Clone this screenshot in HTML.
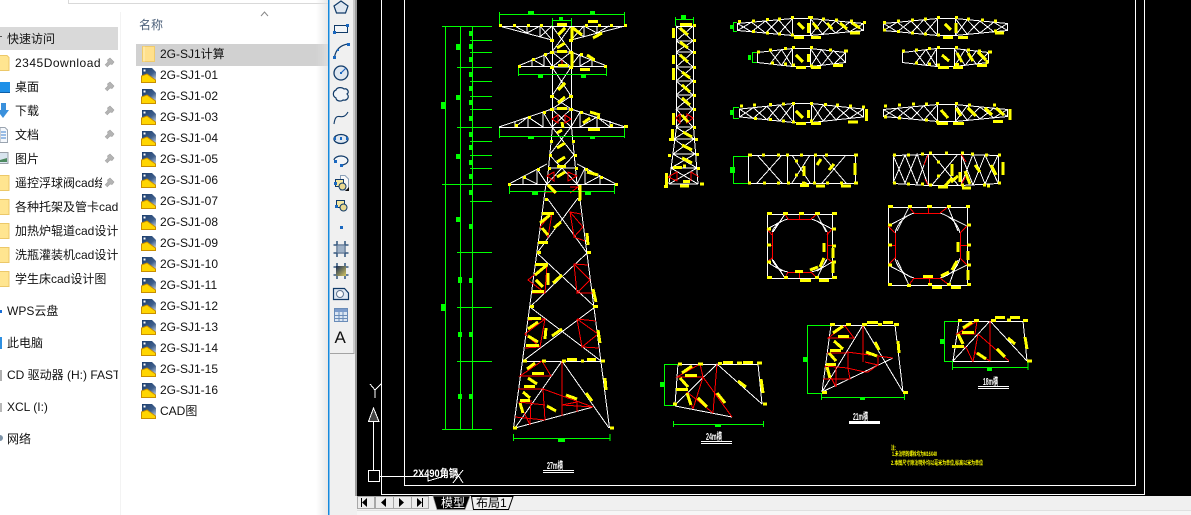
<!DOCTYPE html>
<html lang="zh">
<head>
<meta charset="utf-8">
<title>2G-SJ1</title>
<style>
html,body{margin:0;padding:0;background:#fff}
body{position:relative;width:1191px;height:515px;overflow:hidden;font-family:"Liberation Sans","Noto Sans CJK SC",sans-serif;font-size:12px;color:#111}
.t{position:absolute;height:18px;line-height:18px;white-space:nowrap;overflow:hidden;margin-top:1px}
svg{position:absolute;left:0;top:0}
</style>
</head>
<body>
<div style="position:absolute;left:68px;top:0;width:260px;height:3px;border-left:1px solid #d9d9d9;border-bottom:1px solid #d9d9d9"></div>
<div style="position:absolute;left:120px;top:12px;width:1px;height:503px;background:#f3f3f3"></div>
<div style="position:absolute;left:0;top:27px;width:118px;height:23px;background:#d9d9d9"></div>
<div style="position:absolute;left:136px;top:44px;width:192px;height:22px;background:#d1d1d1"></div>
<div style="position:absolute;left:316px;top:0;width:12px;height:515px;background:linear-gradient(90deg,rgba(225,225,225,0),rgba(225,225,225,.75))"></div>

<div class="t" style="left:139px;top:15px;color:#4c607a">名称</div>
<div class="t" style="left:7px;top:29px">快速访问</div>
<div class="t" style="left:15px;top:53px;letter-spacing:.5px">2345Download</div>
<div class="t" style="left:15px;top:77px">桌面</div>
<div class="t" style="left:15px;top:101px">下载</div>
<div class="t" style="left:15px;top:125px">文档</div>
<div class="t" style="left:15px;top:149px">图片</div>
<div class="t" style="left:15px;top:173px;width:87px">遥控浮球阀cad绘</div>
<div class="t" style="left:15px;top:197px;width:103px">各种托架及管卡cad</div>
<div class="t" style="left:15px;top:221px;width:103px">加热炉辊道cad设计</div>
<div class="t" style="left:15px;top:245px;width:103px">洗瓶灌装机cad设计</div>
<div class="t" style="left:15px;top:269px;width:103px">学生床cad设计图</div>
<div class="t" style="left:7px;top:301px">WPS云盘</div>
<div class="t" style="left:7px;top:333px">此电脑</div>
<div class="t" style="left:7px;top:365px;width:111px">CD 驱动器 (H:) FAST</div>
<div class="t" style="left:7px;top:397px">XCL (I:)</div>
<div class="t" style="left:7px;top:429px">网络</div>

<div class="t" style="left:160px;top:44px">2G-SJ1计算</div>
<div class="t" style="left:160px;top:65px">2G-SJ1-01</div>
<div class="t" style="left:160px;top:86px">2G-SJ1-02</div>
<div class="t" style="left:160px;top:107px">2G-SJ1-03</div>
<div class="t" style="left:160px;top:128px">2G-SJ1-04</div>
<div class="t" style="left:160px;top:149px">2G-SJ1-05</div>
<div class="t" style="left:160px;top:170px">2G-SJ1-06</div>
<div class="t" style="left:160px;top:191px">2G-SJ1-07</div>
<div class="t" style="left:160px;top:212px">2G-SJ1-08</div>
<div class="t" style="left:160px;top:233px">2G-SJ1-09</div>
<div class="t" style="left:160px;top:254px">2G-SJ1-10</div>
<div class="t" style="left:160px;top:275px">2G-SJ1-11</div>
<div class="t" style="left:160px;top:296px">2G-SJ1-12</div>
<div class="t" style="left:160px;top:317px">2G-SJ1-13</div>
<div class="t" style="left:160px;top:338px">2G-SJ1-14</div>
<div class="t" style="left:160px;top:359px">2G-SJ1-15</div>
<div class="t" style="left:160px;top:380px">2G-SJ1-16</div>
<div class="t" style="left:160px;top:401px">CAD图</div>

<svg width="1191" height="515" viewBox="0 0 1191 515" xmlns="http://www.w3.org/2000/svg">
<defs>
<linearGradient id="bl" x1="0" y1="0" x2="1" y2="1"><stop offset="0" stop-color="#183a6a"/><stop offset=".6" stop-color="#3f5f8c"/><stop offset="1" stop-color="#c8d4e2"/></linearGradient>
<linearGradient id="gr" x1="0" y1="0" x2="1" y2="1"><stop offset="0" stop-color="#152a55"/><stop offset="1" stop-color="#d8c860"/></linearGradient>
<g id="cf">
<path d="M1 1H11L15 5V13L1 9Z" fill="url(#bl)"/>
<rect x="2.500" y="2.500" width="2" height="2" fill="#fff"/>
<path d="M.5 15.500V9L6 7L14.500 13V15.500Z" fill="#ffd500" stroke="#c98f00"/>
</g>
<path id="pin" d="M0 7L3 4L2.500 2L5 0L9 4L7 6.500L5 6L2 9" fill="#b4b4b4" stroke="#a0a0a0" stroke-width=".6"/>
<g id="tr1" fill="none" stroke="#fff">
<path vector-effect="non-scaling-stroke" d="M0 5L55 0H73L126 5V12L73 17H55L0 12ZM55 0V17M73 0V17M14 3.700L28 14.500L41 1.300L55 17M14 13.300L28 2.500L41 15.700L55 0M0 5L14 13.300M0 12L14 3.700M112 3.700L98 14.500L85 1.300L73 17M112 13.300L98 2.500L85 15.700L73 0M126 5L112 13.300M126 12L112 3.700"/>
</g>
<g id="tr2" fill="none" stroke="#fff">
<path vector-effect="non-scaling-stroke" d="M0 4L35 0H53L88 4V14L53 18H35L0 14ZM0 4V14M35 0V18M53 0V18M12 2L24 17L35 0M12 16L24 1L35 18M88 4L76 16L64 1L53 18M88 14L76 2L64 17L53 0"/>
</g>
</defs>

<!-- explorer icons -->
<path d="M261 16L264.500 12L268 16" fill="none" stroke="#888"/>
<path d="M0 36.500h2" stroke="#555"/>
<path d="M142.500 46.500h12v15h-12z" fill="#ffe08c" stroke="#f0cb6c"/>
<path d="M144 46.500v15" stroke="#fff0be"/>
<use href="#cf" x="141" y="67"/><use href="#cf" x="141" y="88"/><use href="#cf" x="141" y="109"/><use href="#cf" x="141" y="130"/><use href="#cf" x="141" y="151"/><use href="#cf" x="141" y="172"/><use href="#cf" x="141" y="193"/><use href="#cf" x="141" y="214"/><use href="#cf" x="141" y="235"/><use href="#cf" x="141" y="256"/><use href="#cf" x="141" y="277"/><use href="#cf" x="141" y="298"/><use href="#cf" x="141" y="319"/><use href="#cf" x="141" y="340"/><use href="#cf" x="141" y="361"/><use href="#cf" x="141" y="382"/><use href="#cf" x="141" y="403"/>

<use href="#pin" x="105" y="58"/><use href="#pin" x="105" y="82"/><use href="#pin" x="105" y="106"/><use href="#pin" x="105" y="130"/><use href="#pin" x="105" y="154"/><use href="#pin" x="105" y="178"/>
<path d="M-1 55.500H7L9 57.500V70.500H-1Z" fill="#ffe590" stroke="#ecc869"/>
<path d="M0 82H10V92H0Z" fill="#1e90e8"/><path d="M0 92.500H10" stroke="#0d5fa8"/>
<path d="M1 103H6V110H9L3 118L-3 110H1Z" fill="#3a90dc"/>
<path d="M0 127.500H5L7.500 130V142.500H0Z" fill="#f5f8fc" stroke="#9aa4b0"/><path d="M1 132H6M1 135H6M1 138H6" stroke="#3a80d0"/>
<rect x="-1" y="152.500" width="9" height="11" fill="#d8e4ee" stroke="#9aa0a8"/><path d="M0 160L7 158V162H0Z" fill="#4d8a60"/>
<path d="M-1 175.500H9V190.500H-1Z M-1 199.500H9V214.500H-1Z M-1 223.500H9V238.500H-1Z M-1 247.500H9V262.500H-1Z M-1 271.500H9V286.500H-1Z" fill="#ffe590" stroke="#ecc869"/>
<rect x="0" y="310" width="2" height="3" fill="#1a6fd8"/>
<rect x="0" y="337" width="2" height="12" fill="#2e8fe0"/>
<rect x="0" y="370" width="2" height="11" fill="#b0b0b0"/>
<rect x="0" y="403" width="2" height="9" fill="#b8b8b8"/>
<circle cx="0" cy="438" r="3" fill="#7d93a8"/>

<!-- CAD toolbar -->
<rect x="328" y="0" width="1" height="515" fill="#1689dc"/>
<rect x="329" y="0" width="1" height="515" fill="#7fbfee"/>
<rect x="330" y="0" width="27" height="515" fill="#f0f0f0"/>
<path d="M330 353.500H354M354 0V354" stroke="#a4a4a4" stroke-width="1"/>
<rect x="355" y="0" width="2" height="496" fill="#9c9c9c"/>
<g stroke="#103a68" fill="none">
<path d="M341 1L348 6L345.500 13H336.500L334 6Z" fill="#dfe7f0" stroke-width="1.200"/>
<rect x="334.500" y="25.500" width="13" height="7" fill="#f2f5f8"/>
<path d="M334.500 57C336 49 341 45 348 44" stroke-width="1.200"/>
<circle cx="341" cy="73" r="7" fill="#dfe7f0" stroke-width="1.300"/>
<path d="M341 73L346 68" stroke="#2468c0" stroke-width="1.200"/>
<path d="M336 90C337 87 342 87 344 89C347 88 350 92 347 94C350 97 347 101 343 100C341 102 336 101 336 98C332 96 333 91 336 90Z" fill="#f0f3f7" stroke-width="1.200"/>
<path d="M334 124C336 109 342 123 348 112" stroke-width="1.100"/>
<ellipse cx="341" cy="139" rx="7" ry="4.500" fill="#dfe7f0" stroke-width="1.300"/>
<path d="M334 160A7 4.500 0 1 1 341 165" stroke-width="1.200" fill="#f2f5f8"/>
<path d="M340.500 175.500H345L348.500 179V190H340.500Z" fill="#f8f8f8" stroke="#8aa0b8"/>
<rect x="335.500" y="179.500" width="8" height="7" fill="#f5e7a0"/>
<circle cx="342.500" cy="186.500" r="3.500" fill="#e8d890"/>
<path d="M345 191L349 187V191Z" fill="#111" stroke="none"/>
<rect x="336.500" y="200.500" width="8" height="7" fill="#f5e7a0"/>
<circle cx="343.500" cy="207.500" r="3.500" fill="#e8d890"/>
<path d="M333.500 245H348.500M333.500 253H348.500M337 241V257M345 241V257" stroke-width="1.300"/>
<path d="M337 245H345V253H337Z" fill="#9fb1c6" stroke="#5b7390"/>
<path d="M333.500 267H348.500M333.500 275H348.500M337 263V279M345 263V279" stroke-width="1.300"/>
<path d="M336 266H346V276H336Z" fill="url(#gr)" stroke="none"/>
<path d="M333.500 288.500H344.500L348.500 293V299.500H333.500Z" fill="#dfe9f3" stroke-width="1.200"/>
<circle cx="340" cy="294" r="3.500" fill="#f8fafc" stroke="#5f7590"/>
</g>
<rect x="334.500" y="308.500" width="13" height="13" fill="#dbe6f3" stroke="#6a8cb8"/>
<rect x="335" y="309" width="12" height="3" fill="#7c9ccb"/>
<path d="M334.500 315.500H347.500M334.500 318.500H347.500M339 312V321M343 312V321" stroke="#6a8cb8"/>
<g fill="#1a68c0">
<rect x="333" y="31" width="3" height="3"/><rect x="346" y="24" width="3" height="3"/>
<rect x="333" y="56" width="3" height="3"/><rect x="347" y="43" width="3" height="3"/><rect x="337" y="49" width="2" height="2"/>
<rect x="340" y="72" width="2" height="2"/>
<rect x="340" y="137" width="2" height="3"/><rect x="334" y="137" width="2" height="3"/><rect x="346" y="137" width="2" height="3"/>
<rect x="334" y="160" width="3" height="3"/><rect x="340" y="164" width="3" height="3"/>
<rect x="334" y="182" width="3" height="3"/><rect x="335" y="205" width="3" height="3"/>
<rect x="340" y="226" width="3" height="3"/>
</g>
<text x="334.500" y="343" font-family="'Liberation Sans',sans-serif" font-size="17" fill="#111">A</text>

<!-- drawing area -->
<rect x="357" y="0" width="834" height="496" fill="#000"/>
<g shape-rendering="crispEdges" fill="none">
<path stroke="#fff" d="M381.500 0V494.500H1144.500V0M404.500 0V485.500H1135.500V0"/>

<!-- UCS -->
<path stroke="#fff" d="M370 384L375 390L381 384M375 390V398M373.500 421V470M368.500 470.500H379.500V481.500H368.500ZM380 476.500H428M428 477V481L443 476.500M453 483L463 470M455 470L463 483"/>
<path stroke="#fff" fill="#444" d="M373.500 408L368.500 421.500H379L373.500 408Z"/>

<!-- main tower white -->
<path stroke="#fff" d="M552.500 26V127M571.500 26V127M552.500 127L547 184M571.500 127L577 184
M499 26.500H625M499 26L552 40M625 26L571 40M527 26V33M540 26V37M584 26V37M597 26V33M515 26L527 33L540 26L552 40M540 37L552 26M609 26L597 33L584 26L571 40M584 37L571 26
M552 26L571 52M571 26L552 52M552 52H571M552 52L571 67M571 52L552 67M552 67H571M552 67L571 96M571 67L552 96M552 96L571 109M571 96L552 109M552 109H571M552 109L571 127M571 109L552 127
M518 66.500H607M518 66L552 52M607 66L571 52M532 59V66M544 54V66M580 54V66M592 59V66M532 59L544 66M544 54L552 66M592 59L580 66M580 54L571 66
M499 127.500H625M499 127L552 109M625 127L571 109M515 121V127M528 117V127M543 112V127M580 112V127M597 117V127M610 121V127M528 117L515 127M528 117L543 127M543 112L552 127M597 117L610 127M597 117L580 127M580 112L571 127
M552 127L574 155M571 127L549.500 155M549.500 155L577 184M574 155L547 184M548 168H576
M509 184.500H616M509 184L547 164M616 184L577 164M523 177V184M537 169V184M585 168V184M600 176V184M523 177L537 184M537 169L547 184M600 176L585 184M585 168L577 184
M546 184L513.500 428M578 184L609.500 428M547 198L587 253M578 198L537 253M537 253L595 307M587 253L530 307M530 307L601 361M595 307L523 361M523 361.500H601M515 428L593 407M562 361L609 428M562 361L515 428"/>

<!-- small tower white -->
<path stroke="#fff" d="M676.500 26V127L669 184M693.500 26V127L698 184M676 26.500H693M676 41H693M676 52H693M676 67H693M676 81H693M676 95H693M676 109H693M676 127H693M674 139H694M673 154H695M671 168H697M669 184H698
M676 26L693 41M693 26L676 41M676 41L693 52M693 41L676 52M676 52L693 67M693 52L676 67M676 67L693 81M693 67L676 81M676 81L693 95M693 81L676 95M676 95L693 109M693 95L676 109M676 109L693 127M693 109L676 127M676 127L694 139M693 127L674 139M674 139L695 154M694 139L673 154M673 154L697 168M695 154L671 168M671 168L698 184M697 168L669 184"/>

<!-- trusses -->
<use href="#tr1" transform="translate(737.500 18.500)"/>
<use href="#tr1" transform="translate(883.500 18.500) scale(.984 1)"/>
<use href="#tr2" transform="translate(757.500 48.500)"/>
<use href="#tr2" transform="translate(902.500 48.500) scale(.977 1)"/>
<use href="#tr1" transform="translate(739.500 103.500) scale(.984 1.118)"/>
<use href="#tr1" transform="translate(883.500 104.500) scale(.984 1)"/>
<path stroke="#fff" d="M748.500 155.500H855.500V183.500H748.500ZM787.500 155V183M814.500 155V183M757 155L782 183M782 155L757 183M792 183L810 155M792 155L810 183M822 155L846 183M846 155L822 183"/>
<path stroke="#fff" d="M893.500 155.500L928 154.500H961L998.500 155.500V183.500L961 185.500H928L893.500 183.500ZM928.500 154V185M961.500 154V185M893 155L905 183L917 154L928 185M893 183L905 155L917 184L928 154M932 154L958 185M932 185L958 154M961 154L973 185L985 155L998 183M961 185L973 154L985 184L998 155"/>
<path stroke="#f00" d="M928 155L924 165M928 185L925 179M961 154L966 162M961 185L966 176"/>

<!-- square sections -->
<path stroke="#fff" d="M767.500 214.500H832.500V278.500H767.500ZM785 214L773 232M817 214L826 232M785 278L773 260M817 278L826 260M767 229L782 221M832 229L817 221M767 262L782 271M832 262L817 271M788 219Q776 222 772 232M811 219Q823 222 827 232M788 272Q776 270 772 259M811 272Q823 270 827 259"/>
<path stroke="#f00" d="M788 219.500H811M788 272.500H811M772.500 232V259M827.500 232V259M785 214L788 219M817 214L811 219M785 278L788 272M817 278L811 272M767 229L772 235M767 262L772 258M832 229L827 235M832 262L827 258M799.500 214V219M799.500 272V278M767 245.500H772M827 245.500H832"/>
<path stroke="#fff" d="M888.500 207.500H967.500V285.500H888.500ZM909 207L897 231M948 207L958 231M909 285L897 260M949 285L958 260M888 226L911 214M967 226L943 214M888 265L911 277M967 265L943 277M914 213Q899 218 895 233M940 213Q956 218 960 233M914 278Q899 274 895 258M940 278Q956 274 960 258"/>
<path stroke="#f00" d="M914 213.500H940M914 278.500H940M895.500 233V258M960.500 233V258M909 207L914 213M948 207L940 213M928.500 207V213M909 285L914 278M949 285L940 278M929.500 285V278M888 226L895 233M888 265L895 258M888 245.500H895M967 226L960 233M967 265L960 258M967 245.500H960"/>

<!-- lower sections white -->
<path stroke="#fff" d="M831 325.500H895M831 325L822 392M895 325L903 392M863 325L822 392M863 325L903 392M822 392L893 358"/>
<path stroke="#fff" d="M959 321.500H1023M959 321L953 361M1023 321L1027 361M953 361.500H1009M990 321L953 361M990 321L1027 361"/>
<path stroke="#fff" d="M678 364.500H758M678 364L675 405M758 364L762 404M675 406L732 417M717 364L675 405M717 364L762 404"/>
<path stroke="#fff" d="M543 470.500H574M543 472.500H574M701 441.500H732M701 443.500H732M978 386.500H1009M978 388.500H1009"/>
<rect x="849" y="421" width="31" height="3" fill="#fff"/>

<!-- red -->
<path stroke="#f00" d="M552 213L540 227L548 237L552 213M570 212L583 227L574 237L570 212L581 214M574 237L585 241
M547 264L545 293L532 293M547 264L535 265M547 264L528 280L545 293M574 264L590 280L577 293L574 264L588 265M577 293L593 293
M545 319L528 320M545 319L525 334L540 347L545 319M540 347L525 348M577 319L596 321M577 319L598 334L582 347L577 319M582 347L599 348
M542 361L520 376H551L542 361M518 389H543M543 389L545 420M519 402L545 405M515 417L545 420M530 425L531 400M519 402L530 425M543 389L593 407M562 405L593 407M562 405L577 402V412M562 361V416
M552 119L558 115V123ZM571 119L565 115V123ZM547 176L554 172V181ZM577 176L568 172V181ZM562 60V67M545 192H553M570 193L578 187H570
M676 118L680 114V123ZM693 118L687 114V123ZM668 177L677 172V181ZM699 177L691 172V181
M845 326L828 338H854L845 326M827 353H847M847 352L893 358M863 325V362M865 362L878 365V357M825 366L848 368L850 379H823M836 368V387M848 352V368M865 372H868L878 365M847 368L865 372M825 366L836 387
M977 321L957 334H975L977 321M978 334L973 362M990 321V361M966 347H955M966 347L973 362M978 334L1009 361M974 352L990 361
M700 364L677 377H703L700 364M717 364L713 413M703 377L732 417M703 377L693 409M687 392L693 409M687 392L713 413"/>

<!-- green -->
<path stroke="#0f0" d="M445.500 26V430M460.500 26V430M472.500 26V430M442 26.500H492M470 40.500H492M470 52.500H492M457 67.500H492M470 81.500H492M470 96.500H492M470 109.500H492M457 127.500H492M470 141.500H492M470 155.500H492M470 168.500H492M442 184.500H492M470 201.500H492M457 252.500H492M457 307.500H492M457 361.500H492M442 429.500H492
M499.500 12V26M624.500 12V26M499 14.500H625M552.500 18V26M571.500 18V26M552 20.500H571M518.500 68V76M606.500 68V76M518 74.500H607M499.500 128V138M624.500 128V138M499 136.500H625M509.500 185V194M614.500 185V194M509 191.500H615M513.500 434V441M610 434V441M513 438.500H610
M675.500 17V26M693.500 17V26M675 19.500H694M733.500 22V31M733 22.500H737M733 31.500H737M752.500 52V62M752 52.500H757M752 62.500H757M733.500 107V118M733 107.500H739M733 118.500H739M733.500 156V183M733 156.500H748M733 183.500H748
M664.500 364V405M664 364.500H678M664 405.500H675M673.500 421V427M763.500 421V427M673 424.500H763M807.500 325V393M807 325.500H831M807 393.500H822M821.500 394V400M904.500 394V400M821 397.500H904M944.500 321V361M944 321.500H959M944 361.500H953M952.500 361V370M1028 361V370M952 367.500H1028"/>
<path fill="#0f0" stroke="none" d="M441 102h5v7h-5zM441 304h5v7h-5zM456 44h5v6h-5zM456 95h5v5h-5zM456 154h5v5h-5zM456 217h5v5h-5zM458 277h4v6h-4zM458 332h4v5h-4zM458 394h4v5h-4zM469 31h4v5h-4zM469 44h4v5h-4zM469 57h4v5h-4zM469 72h4v5h-4zM469 86h4v5h-4zM469 100h4v5h-4zM469 116h4v5h-4zM469 132h4v5h-4zM469 145h4v5h-4zM469 160h4v5h-4zM469 174h4v5h-4zM469 190h4v5h-4zM469 224h4v5h-4zM469 278h4v5h-4zM469 332h4v5h-4zM469 394h4v5h-4z
M528 11h6v3h-6zM590 11h5v3h-5zM559 17h4v3h-4zM538 75h5v3h-5zM581 75h5v3h-5zM528 136h6v3h-6zM590 136h5v3h-5zM532 191h6v4h-6zM585 191h6v4h-6zM558 438h7v4h-7zM681 15h5v4h-5zM730 25h3v4h-3zM748 55h3v5h-3zM730 110h3v5h-3zM730 167h5v6h-5zM660 382h4v5h-4zM715 424h6v3h-6zM803 357h4v5h-4zM860 397h5v3h-5zM940 339h5v5h-5zM987 368h5v3h-5z"/>

<!-- yellow -->
<path stroke="#ff0" stroke-width="3" d="M557 24.500h10M588 21.500h10M499 25.500h3M513 25.500h3M527 25.500h3M540 25.500h3M585 25.500h3M598 25.500h3M610 25.500h3M624 25.500h3
M550 40.500h4M569 40.500h4M550 52.500h4M569 52.500h4M550 67.500h4M569 67.500h4M550 96.500h4M569 96.500h4M550 109.500h4M569 109.500h4
M558 35L565 28M573 28L582 35M593 38L602 33M557 48L565 43M572 27V40M572 52V67M557 51.500h10M587 55L593 59M580 69.500h10M558 65.500h10M518 66.500h3M604 66.500h3M532 59.500h3M544 54.500h3M580 54.500h3M592 59.500h3
M558 90L565 83M558 103L565 97M557 108.500h10M590 112L600 115M583 123L590 118M588 129.500h12M562 122L563 128M557 133L562 130M557 148L565 143M557 162L565 157M557 166.500h9M587 172L598 175M557 177L565 172M548 185L556 193M580 185V200
M515 125.500h3M528 117.500h3M543 112.500h3M580 112.500h3M597 117.500h3M610 125.500h3M624 126.500h4M550 141.500h3M572 141.500h3M549 155.500h3M574 155.500h3M548 168.500h3M575 168.500h3M523 177.500h3M537 169.500h3M585 169.500h3M600 177.500h3M508 184.500h3M615 184.500h3
M542 213.500h12M540 223L550 215M542 228L548 235M538 242.500h10M554 228L561 222M587 233L588 245M545 199.500h3M578 199.500h3
M535 264.500h13M535 275L547 265M536 280L543 287M532 291.500h12M548 273V285M553 283L562 275M593 289L596 302M530 306.500h4M593 306.500h5M537 252.500h4M587 252.500h4
M528 318.500h13M528 329L538 322M528 336L538 342M526 345.500h13M546 328L545 339M552 336L562 329M598 330L600 343
M567 359.500h10M587 359.500h9M542 361h4M562 361h4M581 361h3M601 361h4M523 361h4
M527 369L535 363M532 373.500h12M528 378L537 384M524 386.500h11M523 392L530 398M520 400.500h10M520 403L523 413M566 395L577 399M547 406L556 411M586 393L592 401M605 378L606 390M513 428h4M610 428h4
M680 24.500h12M693 25.500h3M673.500 28V38M673.500 55V64M673.500 68V80M673.500 113V125M672.500 129V141M666.500 173V185M680 28L688 35M680 42L688 48M680 55L688 62M682 72L690 78M682 85L690 92M682 98L690 105M682 115L688 122M683 132L692 137M682 145L692 150M682 158L692 163M673 167.500h9M680 186h9M700 184h4M664 186.500h4M693 40.500h3M693 52.500h3M693 67.500h3M693 81.500h3M693 95.500h3M693 109.500h3M693 127.500h3M695 139.500h3M696 154.500h3M697 168.500h3M668 155.500h3M669 139.500h3M683 166h3M683 181.500h7
M738 21.500h3M752 21h3M766 19.500h3M778 19h3M791 17.500h3M808 17.500h5M822 19h3M835 20h3M850 21h3M863 22.500h3M752 31.500h3M766 33h3M778 34h3M791 35h3
M798 23L804 29M813 23L818 29M827 23L832 29M840 23L847 29M852 23L860 28M794 37.500h10M811 37.500h10M850 33h10M808.500 23V33
M883 22.500h3M897 21h3M911 20h3M924 19h3M937 17.500h3M955 17.500h3M967 19h3M981 20h3M994 21h3M883 30h3M897 31.500h3M911 33h3M924 34h3M937 35h3M943 37.500h10M958 37.500h10M945 24L951 30M956 23V33M995 33h9M994 31h3
M757 52h3M769 50h3M784 48.500h3M792 47.500h3M810 47.500h3M829 50h3M844 51h4M771 63h3M784 64h3M792 65h3M796 67.500h10M811 67.500h10M833 65.500h10M796 55L803 62M808.500 54V62M810 66h3
M902 51h3M915 50h3M928 48.500h3M937 47.500h3M955 47.500h3M967 50h3M978 51h3M988 52h4M915 63h3M928 64h3M937 65h3M938 67.500h11M953 67.500h10M977 65.500h10M942 55L949 61M957 53L962 62M968 53L973 61M978 52L986 60M955 64.500h4M987 60V64
M740 106h3M753 105h3M769 104.500h3M782 104h3M792 103.500h3M810 103.500h3M824 104.500h3M836 105h3M849 106h3M862 107h3M754 118.500h3M769 119.500h3M782 121h3M792 122h3M796 123.500h10M811 123.500h10M848 122h10M796 111L803 118M808.500 110V118M810 121h3M866.500 109V121
M884 106h3M898 105h3M912 104h3M925 104h3M936 103.500h3M955 103.500h3M968 105h3M993 105h3M884 117h3M898 118h3M925 120h3M936 122h3M937 123.500h11M953 123.500h11M993 121.500h10M941 110L948 118M956 108L961 116M968 108L976 116M985 108L992 115M996 108L1004 115M1010 109V120
M748 155h4M762 155h3M777 155h3M786 155h3M800 155h3M814 155h3M825 155h3M854 155h4M748 183h3M763 183h3M777 183h3M787 183h3M802 183h3M813 183h3M826 183h3M840 183h3M854 183h4M795 161h3M795 175h3M804 166V176M805 182V184M800 185.500h9M816 186h9M841 186h10M855 163V175M817 165L821 159M829 170L834 164
M893 155h3M907 155h3M921 154h3M929 153h3M945 153h3M961 153h3M971 154h3M985 155h3M998 155h3M893 183h3M907 184h3M921 184h3M929 185h3M945 185h3M961 185h3M983 185h3M998 183h3M938 187h10M962 188h9M987 186h3M937 162h3M937 176h3M952 164V176M960 172V182M965 171L970 184M951 182L958 176M945 186L952 178M975 165L980 172M991 165L996 175M1003 162V175
M767 213.500h5M783 213.500h5M799 213.500h5M815 213.500h5M832 213.500h5M767 229h4M767 245h4M767 262h4M832 229h4M832 246h4M832 262h4M767 277.500h5M784 277.500h4M800 280.500h11M819 280.500h10M815 277.500h4M832 277.500h5M795 271.500h8M810 270L818 267M820 267L824 258M824 243V252M833 248V258M833 262V273
M888 206.500h5M908 206.500h4M927 206.500h5M947 206.500h4M966 206.500h4M888 225h4M888 245h4M888 265h4M967 225h4M967 245h4M967 265h4M888 284.500h4M907 285.500h4M928 284.500h4M932 287.500h10M951 287.500h10M947 284.500h4M967 284.500h4M923 276.500h10M941 276L949 272M952 270L957 261M958 242V252M968 251V260M968 270V280
M830 324.500h5M846 324.500h5M862 324.500h5M867 322.500h11M878 324.500h4M883 322.500h10M894 324.500h5M833 333L843 326M838 336.500h11M834 341L843 349M830 350.500h11M829 353L836 361M826 364.500h10M827 367L830 378M866 352L877 356M875 342L879 350M898 341L899 353M822 392.500h5M903 392.500h5
M958 320.500h4M974 320.500h5M991 320.500h5M995 317.500h10M1007 320h4M1010 317.500h10M1023 320.500h5M1027 361h5M963 328L972 322M962 332.500h12M958 334L963 344M952 346.500h12M977 353L986 359M997 349L1005 357M1008 338L1015 344M1025 337L1027 349
M678 364h4M698 364h5M718 363.500h4M723 362.500h10M737 363h5M743 362.500h10M757 363h5M763 404h4M673 404h4M682 373L692 366M685 375.500h12M680 378L688 387M676 389.500h12M687 393L691 405M698 398L707 407M717 393L725 403M738 381L746 387M761 379L763 393"/>

<!-- drawing text -->
<g stroke="none" font-family="'Liberation Sans','Noto Sans CJK SC',sans-serif" font-weight="bold">
<text x="413" y="477" font-size="11" fill="#fff" textLength="45" lengthAdjust="spacingAndGlyphs">2X490角钢</text>
<text x="547" y="469" font-size="10" fill="#fff" textLength="16" lengthAdjust="spacingAndGlyphs">27m横</text>
<text x="706" y="440" font-size="10" fill="#fff" textLength="16" lengthAdjust="spacingAndGlyphs">24m横</text>
<text x="853" y="420" font-size="10" fill="#fff" textLength="15" lengthAdjust="spacingAndGlyphs">21m横</text>
<text x="983" y="385" font-size="10" fill="#fff" textLength="15" lengthAdjust="spacingAndGlyphs">18m横</text>
<text x="891" y="450" font-size="6" fill="#ff0" textLength="5" lengthAdjust="spacingAndGlyphs">注:</text>
<text x="892" y="456" font-size="6" fill="#ff0" textLength="45" lengthAdjust="spacingAndGlyphs">1.未注明的螺栓均为M16X40</text>
<text x="891" y="465" font-size="6" fill="#ff0" textLength="92" lengthAdjust="spacingAndGlyphs">2.本图尺寸除注明外均以毫米为单位,标高以米为单位</text>
</g>
</g>

<!-- bottom bar -->
<rect x="357" y="496" width="834" height="19" fill="#f0f0f0"/>
<rect x="357" y="510" width="834" height="1" fill="#e0e0e0"/>
<rect x="357" y="511" width="834" height="4" fill="#f6f6f6"/>
<g fill="#ececec" stroke="#a8a8a8">
<rect x="357.500" y="496.500" width="17" height="12"/><rect x="375.500" y="496.500" width="18" height="12"/><rect x="393.500" y="496.500" width="18" height="12"/><rect x="411.500" y="496.500" width="17" height="12"/>
</g>
<path d="M367 498V507L362 502.500ZM361 498H362V507H361ZM386 498V507L381 502.500ZM399 498V507L404 502.500ZM417 498V507L422 502.500ZM422 498H423V507H422Z" fill="#000"/>
<path d="M433 496H470L465 509.500H437Z" fill="#000" stroke="#8a8a8a" stroke-width=".7"/>
<path d="M471.500 496.500H513L508.500 509.500H473.500Z" fill="#f0f0f0" stroke="#000"/>
<text x="441" y="507" font-size="12" fill="#fff" font-family="'Liberation Sans','Noto Sans CJK SC',sans-serif">模型</text>
<text x="476" y="507" font-size="12" fill="#000" font-family="'Liberation Sans','Noto Sans CJK SC',sans-serif">布局1</text>
</svg>
</body>
</html>
